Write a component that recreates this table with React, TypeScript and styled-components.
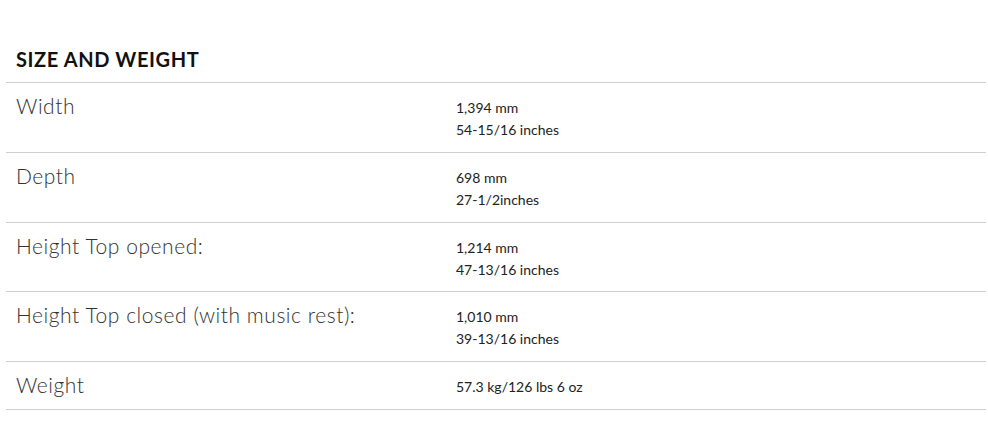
import React from "react";
import styled, { createGlobalStyle } from "styled-components";

const Global = createGlobalStyle`
  html, body { margin: 0; padding: 0; background: #fff; }
  body { font-family: Lato, "Open Sans", sans-serif; color: #222; }
`;

const Section = styled.section`
  padding: 46px 2px 0 6px;
`;

const Title = styled.h2`
  margin: 0;
  padding: 0 10px 9px;
  font-size: 20px;
  line-height: 27px;
  font-weight: 700;
  color: #111;
  letter-spacing: 0.6px;
`;

const Table = styled.div`
  border-top: 1px solid #cfcfcf;
`;

const Row = styled.div<{ $h: number }>`
  display: grid;
  grid-template-columns: 440px 1fr;
  border-bottom: 1px solid #cfcfcf;
  padding: 10px 0 0 10px;
  box-sizing: border-box;
  height: ${(p) => p.$h}px;
`;

const Label = styled.div`
  font-size: 21px;
  line-height: 26px;
  font-weight: 300;
  color: #333;
  letter-spacing: 0.55px;
`;

const Values = styled.div`
  padding-top: 4px;
  font-size: 14px;
  line-height: 22px;
  color: #222;
`;

const rows = [
  { label: "Width", values: ["1,394 mm", "54-15/16 inches"] },
  { label: "Depth", values: ["698 mm", "27-1/2inches"] },
  { label: "Height Top opened:", values: ["1,214 mm", "47-13/16 inches"] },
  { label: "Height Top closed (with music rest):", values: ["1,010 mm", "39-13/16 inches"] },
  { label: "Weight", values: ["57.3 kg/126 lbs 6 oz"] },
];

export default function App() {
  return (
    <>
      <Global />
      <Section>
        <Title>SIZE AND WEIGHT</Title>
        <Table>
          {rows.map((r) => (
            <Row key={r.label} $h={r.values.length > 1 ? 69.8 : 48}>
              <Label>{r.label}</Label>
              <Values>
                {r.values.map((v) => (
                  <div key={v}>{v}</div>
                ))}
              </Values>
            </Row>
          ))}
        </Table>
      </Section>
    </>
  );
}
